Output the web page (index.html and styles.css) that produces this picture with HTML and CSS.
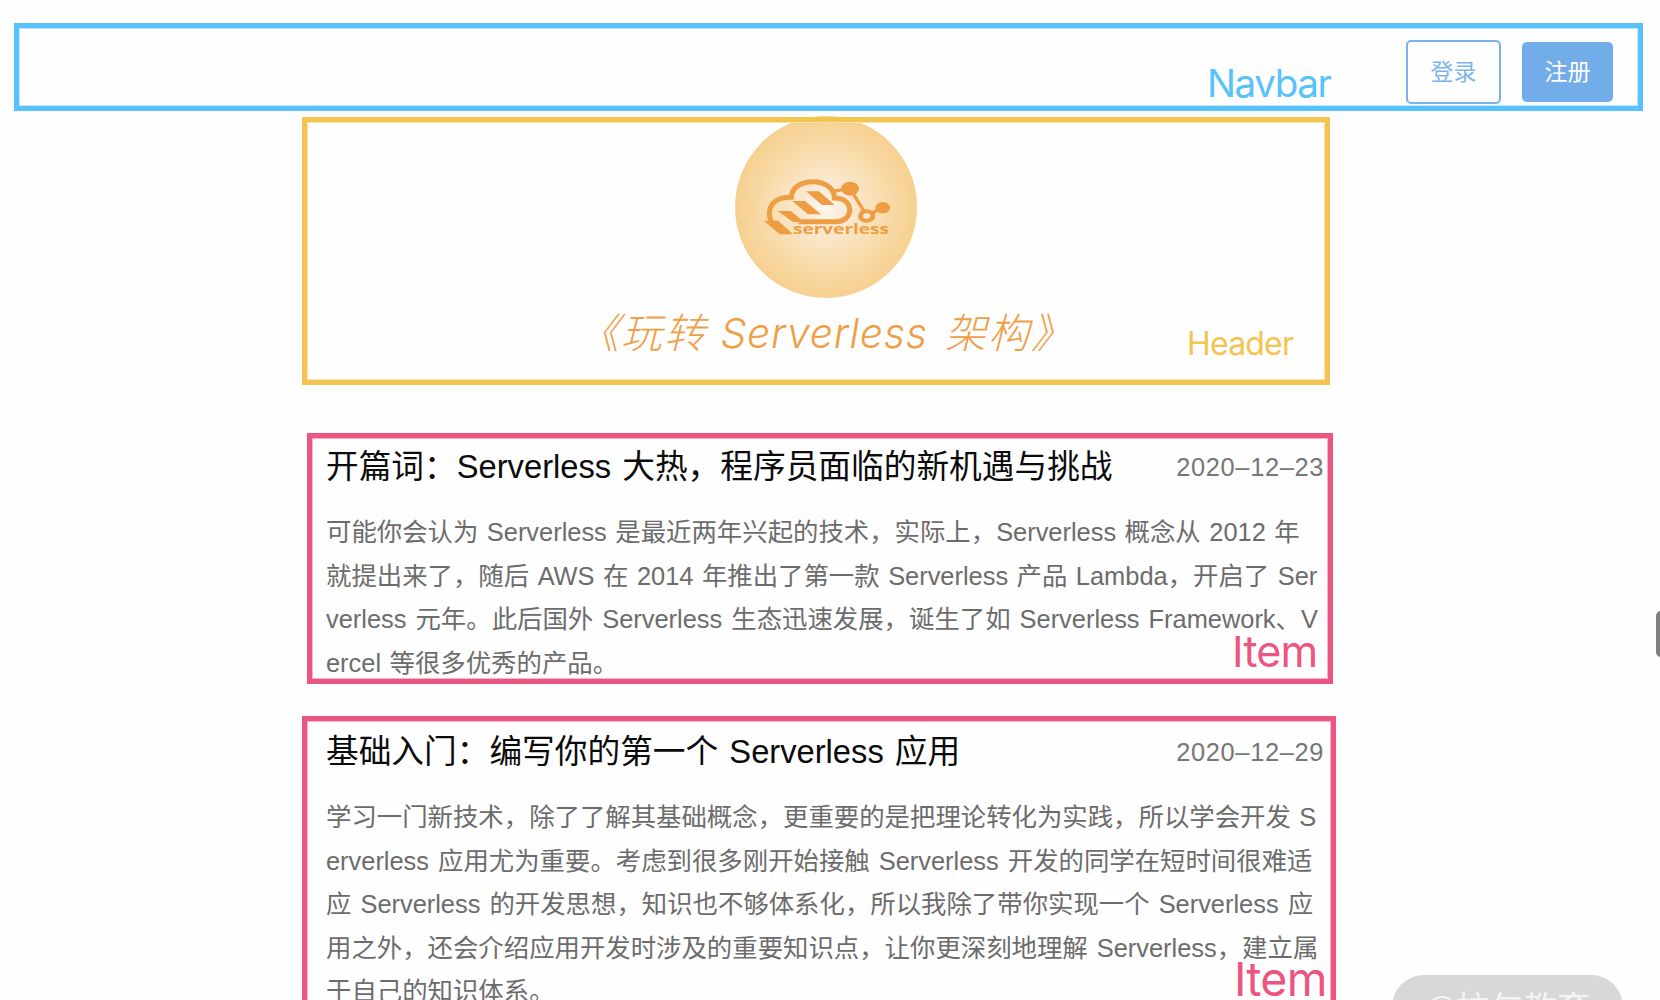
FILE: index.html
```html
<!DOCTYPE html>
<html lang="zh-CN">
<head>
<meta charset="utf-8">
<title>玩转 Serverless 架构</title>
<link rel="stylesheet" href="styles.css">
</head>
<body>
<nav class="frame navbar">
  <span class="label label-navbar">Navbar</span>
  <button class="btn btn-login">登录</button>
  <button class="btn btn-register">注册</button>
</nav>

<header class="frame header">
  <svg class="logo" viewBox="105 48 546 546">
    <defs>
      <radialGradient id="glow">
        <stop offset="0" stop-color="#fbf6f0"/>
        <stop offset=".28" stop-color="#fae8cf"/>
        <stop offset=".65" stop-color="#f8dcab"/>
        <stop offset="1" stop-color="#f7d090"/>
      </radialGradient>
    </defs>
    <circle cx="378" cy="321" r="273" fill="url(#glow)"/>
    <g fill="none" stroke="#ef9d43" stroke-width="15">
      <path d="M216 368C203 346 207 318 224 305Q240 292 274 292C274 265 302 245 338 245C374 245 403 264 403 294C432 294 449 309 449 331C449 352 431 365 404 365H296"/>
      <path d="M400 274L450 265L500 347L548 323" stroke-width="10"/>
    </g>
    <g fill="#ef9d43">
      <path d="M318 274H357L404 315H366Z M276 303H315L363 343H324Z M233 333H272L312 366H278Z M191 362H234L279 403H239Z"/>
      <ellipse cx="450" cy="266" rx="27" ry="21"/>
      <ellipse cx="548" cy="323" rx="22" ry="17"/>
      <ellipse cx="500" cy="348" rx="26" ry="20"/>
    </g>
    <ellipse cx="500" cy="348" rx="11" ry="8" fill="#faead5"/>
    <text class="logo-text" x="279" y="403" textLength="288" lengthAdjust="spacingAndGlyphs">serverless</text>
  </svg>
  <h1 class="title">《玩转 <span class="title-en">Serverless</span> 架构》</h1>
  <span class="label label-header">Header</span>
</header>

<main>
  <article class="frame item item-first">
    <div class="item-head"><h2>开篇词：Serverless 大热，程序员面临的新机遇与挑战</h2><time>2020–12–23</time></div>
    <p>可能你会认为 Serverless 是最近两年兴起的技术，实际上，Serverless 概念从 2012 年<br>就提出来了，随后 AWS 在 2014 年推出了第一款 Serverless 产品 Lambda，开启了 Ser<br><span class="loose">verless 元年。此后国外 Serverless 生态迅速发展，诞生了如 Serverless Framework、V</span><br>ercel 等很多优秀的产品。</p>
    <span class="label label-item">Item</span>
  </article>
  <article class="frame item item-second">
    <div class="item-head"><h2>基础入门：编写你的第一个 Serverless 应用</h2><time>2020–12–29</time></div>
    <p>学习一门新技术，除了了解其基础概念，更重要的是把理论转化为实践，所以学会开发 S<br><span class="loose">erverless 应用尤为重要。考虑到很多刚开始接触 Serverless 开发的同学在短时间很难适<br>应 Serverless 的开发思想，知识也不够体系化，所以我除了带你实现一个 Serverless 应<br>用之外，还会介绍应用开发时涉及的重要知识点，让你更深刻地理解 Serverless，建立属</span><br>于自己的知识体系。</p>
    <span class="label label-item">Item</span>
  </article>
</main>

<div class="watermark">@拉勾教育</div>
<div class="handle"></div>
</body>
</html>
```
FILE: styles.css
```css
* { box-sizing: border-box; }

body {
  margin: 0;
  width: 1660px;
  height: 1000px;
  padding-top: 23px;
  overflow: hidden;
  position: relative;
  background: #fefefe;
  font-family: "Liberation Sans", "Noto Sans CJK SC", sans-serif;
}

h1, h2, p { margin: 0; font-weight: 400; white-space: nowrap; }

.frame { position: relative; border: 5px solid; }

.label {
  position: absolute;
  font-family: Inter, sans-serif;
  line-height: 1;
  white-space: nowrap;
}

.navbar {
  margin-left: 14px;
  width: 1629px;
  height: 88px;
  border-color: #58c2fa;
  box-shadow: inset 0 0 0 1px #bfe8fd;
  display: flex;
  justify-content: flex-end;
  align-items: flex-start;
  padding: 12px 25px 0 0;
  gap: 21px;
}

.btn {
  font: 400 23px/1 "Noto Sans CJK SC", sans-serif;
  border-radius: 5px;
  padding: 0 0 3px;
}
.btn-login {
  width: 95px;
  height: 64px;
  color: #7fb5ec;
  background: #fefefe;
  border: 2px solid #7ab2ea;
}
.btn-register {
  width: 91px;
  height: 60px;
  margin-top: 2px;
  color: #fefefe;
  background: #72ade9;
  border: 0;
}

.label-navbar { left: 1188px; top: 36px; font-size: 38.5px; letter-spacing: -1.4px; color: #58c2fa; }

.header {
  margin: 6px 0 0 302px;
  width: 1028px;
  height: 268px;
  border-color: #f4c450;
  box-shadow: inset 0 0 0 1px #fae2a8;
  display: flex;
  flex-direction: column;
  align-items: center;
}
.logo {
  width: 182px;
  height: 182px;
  margin-top: -6px;
  margin-left: 20px;
  position: relative;
  z-index: -1;
  flex: none;
}
.logo-text { font: 700 45px "Open Sans", sans-serif; fill: #ef9d43; }

.title {
  margin-top: 5px;
  margin-left: 20px;
  font: italic 300 41px/60px Inter, "Noto Sans CJK SC", sans-serif;
  letter-spacing: 2px;
  color: #ef9f48;
}
.title-en { letter-spacing: .7px; margin-right: 4px; }
.label-header { left: 880px; top: 206px; font-size: 32px; letter-spacing: -.8px; color: #f4c450; }

.item { border-color: #ec557f; box-shadow: inset 0 0 0 1px #f7b3c6; }
.item-first { margin: 48px 0 0 307px; width: 1026px; height: 251px; padding: 0 4px 0 14px; }
.item-second { margin: 32px 0 0 302px; width: 1034px; height: 310px; padding: 2px 7px 0 19px; }

.item-head {
  display: flex;
  justify-content: space-between;
  align-items: center;
  height: 58px;
}
.item h2 { font-size: 32.7px; line-height: 58px; word-spacing: 2px; color: #0b0b0b; }
.item time { font-size: 25.4px; letter-spacing: .65px; color: #777; }
.item p {
  margin-top: 15px;
  font-size: 25.4px;
  line-height: 43.6px;
  word-spacing: 1.45px;
  color: #6c6c6c;
}
.item .loose { word-spacing: 2px; }
.label-item { color: #ec557f; }
.item-first .label-item { left: 920px; top: 192px; font-size: 43px; letter-spacing: -.8px; }
.item-second .label-item { left: 927px; top: 235px; font-size: 46.5px; letter-spacing: -.8px; }

.watermark {
  position: absolute;
  left: 1392px;
  top: 975px;
  width: 231px;
  height: 64px;
  border-radius: 32px;
  background: #d8d8d8;
  color: #f4f4f4;
  font: 33.5px/62px "Noto Sans CJK SC", sans-serif;
  text-align: center;
}
.handle {
  position: absolute;
  left: 1656px;
  top: 611px;
  width: 10px;
  height: 46px;
  border-radius: 5px;
  background: #7f7f7f;
}
```
